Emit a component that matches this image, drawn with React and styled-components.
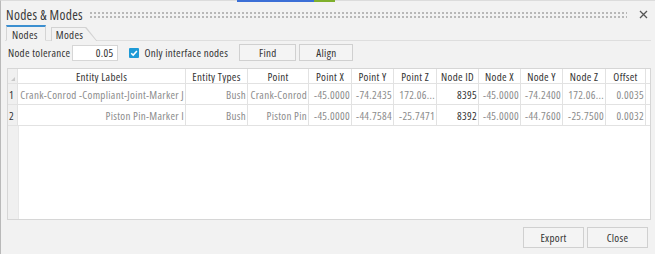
import React from 'react'
import styled, { createGlobalStyle } from 'styled-components'

const GlobalStyle = createGlobalStyle`
    html, body {
        margin: 0;
        padding: 0;
        background: #f2f2f2;
    }
    body {
        font-family: "Open Sans", Roboto, sans-serif;
        font-stretch: 80%;
        font-size: 11px;
        letter-spacing: 0.3px;
        color: #333;
    }
`

const columns = [
    { key: 'label', title: 'Entity Labels', width: 168 },
    { key: 'type', title: 'Entity Types', width: 62 },
    { key: 'point', title: 'Point', width: 61 },
    { key: 'px', title: 'Point X', width: 43 },
    { key: 'py', title: 'Point Y', width: 42 },
    { key: 'pz', title: 'Point Z', width: 43 },
    { key: 'nid', title: 'Node ID', width: 42, strong: true },
    { key: 'nx', title: 'Node X', width: 42 },
    { key: 'ny', title: 'Node Y', width: 42 },
    { key: 'nz', title: 'Node Z', width: 43 },
    { key: 'off', title: 'Offset', width: 40 },
]

const rows = [
    {
        label: 'Crank-Conrod -Compliant-Joint-Marker J', type: 'Bush', point: 'Crank-Conrod',
        px: '-45.0000', py: '-74.2435', pz: '172.06...', nid: '8395',
        nx: '-45.0000', ny: '-74.2400', nz: '172.06...', off: '0.0035',
    },
    {
        label: 'Piston Pin-Marker I', type: 'Bush', point: 'Piston Pin',
        px: '-45.0000', py: '-44.7584', pz: '-25.7471', nid: '8392',
        nx: '-45.0000', ny: '-44.7600', nz: '-25.7500', off: '0.0032',
    },
]

const gridCols = '10px ' + columns.map(c => c.width + 'px').join(' ')

export default function App() {
    return (
        <>
            <GlobalStyle />
            <Window>
                <TitleBar>
                    <Title>Nodes &amp; Modes</Title>
                    <Grip />
                    <CloseIcon viewBox='0 0 9 9'>
                        <path d='M1 1 L8 8 M8 1 L1 8' />
                    </CloseIcon>
                </TitleBar>

                <TabStrip>
                    <Tab $active>Nodes</Tab>
                    <Tab>Modes</Tab>
                </TabStrip>

                <Controls>
                    <Label>Node tolerance</Label>
                    <NumberBox>0.05</NumberBox>
                    <Check>
                        <CheckBox>
                            <svg viewBox='0 0 10 10' width='10' height='10'>
                                <path d='M2.2 5.2 L4.2 7.1 L7.9 2.9' fill='none' stroke='#fff' strokeWidth='1.5' />
                            </svg>
                        </CheckBox>
                        Only interface nodes
                    </Check>
                    <Button $width={57}>Find</Button>
                    <Button $width={54}>Align</Button>
                </Controls>

                <TableFrame>
                    <Row $header>
                        <CornerCell>
                            <svg viewBox='0 0 4 4' width='4' height='4'>
                                <path d='M4 0 L4 4 L0 4 Z' fill='#c8c8c8' />
                            </svg>
                        </CornerCell>
                        {columns.map(c => <HeadCell key={c.key}>{c.title}</HeadCell>)}
                    </Row>
                    {rows.map((r, i) => (
                        <Row key={i}>
                            <IndexCell>{i + 1}</IndexCell>
                            {columns.map(c => (
                                <Cell key={c.key} $strong={c.strong}>{r[c.key]}</Cell>
                            ))}
                        </Row>
                    ))}
                    <Filler>
                        <IndexGutter />
                    </Filler>
                </TableFrame>

                <Footer>
                    <Button $width={61} $height={21}>Export</Button>
                    <Button $width={61} $height={21}>Close</Button>
                </Footer>
            </Window>
        </>
    )
}

const Window = styled.div`
    position: relative;
    width: 655px;
    height: 254px;
    box-sizing: border-box;
    border-left: 1px solid #b9b9b9;
    border-top: 1px solid #dcdcdc;
    background: #f2f2f2;
    display: flex;
    flex-direction: column;

    /* accent strip of the host window peeking over the top edge */
    &::before {
        content: '';
        position: absolute;
        top: -1px;
        left: 236px;
        width: 77px;
        height: 2px;
        background: #3b6fd6;
    }
    &::after {
        content: '';
        position: absolute;
        top: -1px;
        left: 313px;
        width: 21px;
        height: 2px;
        background: #7faf2c;
    }
`

const TitleBar = styled.div`
    display: flex;
    align-items: center;
    height: 17px;
    margin-top: 5px;
    padding: 0 7px 0 5px;
`

const Title = styled.span`
    font-size: 13.5px;
    color: #3a3a3a;
    white-space: nowrap;
`

const Grip = styled.div`
    flex: 1;
    height: 7px;
    margin: 0 12px 0 6px;
    background-image: radial-gradient(circle, #b8b8b8 0.9px, transparent 1.1px);
    background-size: 4px 4px;
    background-position: 0 0;
`

const CloseIcon = styled.svg`
    width: 9px;
    height: 9px;
    stroke: #555;
    stroke-width: 1.3;
`

const TabStrip = styled.div`
    display: flex;
    align-items: flex-end;
    height: 16px;
    margin: 1px 4px 0 4px;
    padding-left: 1px;
    border-bottom: 1px solid #dedede;
`

const Tab = styled.div`
    position: relative;
    z-index: 0;
    box-sizing: border-box;
    height: ${p => p.$active ? '16px' : '14px'};
    margin-bottom: -1px;
    margin-right: ${p => p.$active ? '5px' : '0'};
    padding: ${p => p.$active ? '1px 7px 0 5px' : '1px 14px 0 5px'};
    display: flex;
    align-items: center;
    font-size: 11px;
    color: #333;
    background: ${p => p.$active ? '#f2f2f2' : '#d2d2d2'};
    border: ${p => p.$active ? '1px solid #d4d4d4' : 'none'};
    border-top: ${p => p.$active ? '2px solid #3c8fd0' : 'none'};
    border-bottom: ${p => p.$active ? '1px solid #f2f2f2' : 'none'};
    clip-path: ${p => p.$active ? 'none' : 'polygon(0 0, calc(100% - 11px) 0, 100% 100%, 0 100%)'};

    ${p => !p.$active && `
        &::before {
            content: '';
            position: absolute;
            inset: 1px 1px 0 1px;
            z-index: -1;
            background: #f2f2f2;
            clip-path: polygon(0 0, calc(100% - 11px) 0, 100% 100%, 0 100%);
        }
    `}
`

const Controls = styled.div`
    display: flex;
    align-items: center;
    height: 17px;
    margin: 3px 0 0 7px;
`

const Label = styled.span`
    margin-right: 2px;
    white-space: nowrap;
`

const NumberBox = styled.div`
    box-sizing: border-box;
    width: 46px;
    height: 16px;
    padding: 0 4px;
    background: #fff;
    border: 1px solid #d6d6d6;
    display: flex;
    align-items: center;
    justify-content: flex-end;
`

const Check = styled.label`
    display: flex;
    align-items: center;
    gap: 5px;
    margin-left: 11px;
    width: 110px;
    white-space: nowrap;
`

const CheckBox = styled.span`
    width: 10px;
    height: 10px;
    border-radius: 1px;
    background: #1e9ad6;
    display: flex;
`

const Button = styled.div`
    box-sizing: border-box;
    width: ${p => p.$width}px;
    height: ${p => p.$height || 17}px;
    margin-right: 3px;
    background: #f4f4f4;
    border: 1px solid #d0d0d0;
    display: flex;
    align-items: center;
    justify-content: center;
    color: #333;
`

const TableFrame = styled.div`
    box-sizing: border-box;
    width: 644px;
    height: 152px;
    margin: 7px 0 0 6px;
    background: #fff;
    border: 1px solid #d6d6d6;
    display: flex;
    flex-direction: column;
`

const Row = styled.div`
    display: grid;
    grid-template-columns: ${gridCols};
    height: ${p => p.$header ? '14px' : '20px'};
    border-bottom: 1px solid #e2e2e2;
    background: #fff;
`

const CellBase = styled.div`
    box-sizing: border-box;
    border-right: 1px solid #e2e2e2;
    display: flex;
    align-items: center;
    overflow: hidden;
    white-space: nowrap;
`

const CornerCell = styled(CellBase)`
    background: #f0f0f0;
    align-items: flex-end;
    justify-content: flex-end;
    padding: 0 2px 2px 0;
`

const HeadCell = styled(CellBase)`
    justify-content: center;
    color: #333;
`

const IndexCell = styled(CellBase)`
    background: #f0f0f0;
    padding-left: 1px;
    color: #333;
`

const Cell = styled(CellBase)`
    justify-content: flex-end;
    padding: 0 1px 0 1px;
    color: ${p => p.$strong ? '#333' : '#8c8c8c'};
`

const Filler = styled.div`
    flex: 1;
    display: flex;
`

const IndexGutter = styled.div`
    width: 10px;
    background: #f0f0f0;
    border-right: 1px solid #e8e8e8;
`

const Footer = styled.div`
    display: flex;
    justify-content: flex-end;
    margin: 7px 4px 0 0;
`
